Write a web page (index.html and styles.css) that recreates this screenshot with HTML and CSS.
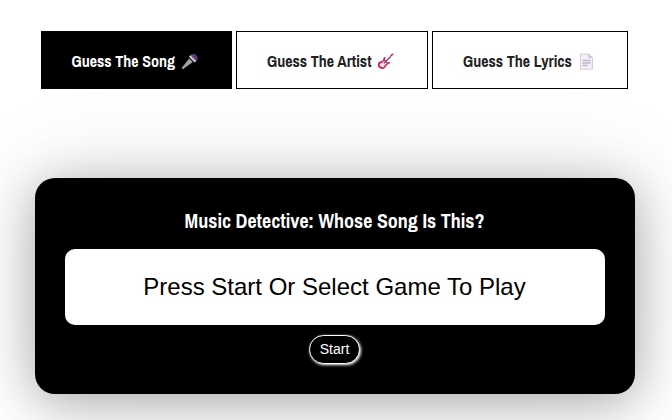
FILE: index.html
```html
<!DOCTYPE html>
<html lang="en">
<head>
<meta charset="utf-8">
<title>Music Detective</title>
<link rel="stylesheet" href="styles.css">
</head>
<body>
<nav class="games">
  <button class="game active"><span class="label song">Guess The Song</span>
    <svg class="icon" viewBox="0 0 17 17"><path d="M1 14.500 8.200 5.500l3.600 3.600-9.200 6.700Q.7 16.600 1 14.500Z" fill="#a2a0a3"/><path d="M9 4.500Q8.700 1.200 12 1q4.500.1 4.500 4.500 0 3-3.300 3Z" fill="#5c3b79"/><path d="m7.800 3.700 1.500-1.500 6 5.800-1.600 1.500Z" fill="#c9c5cc"/></svg></button>
  <button class="game"><span class="label artist">Guess The Artist</span>
    <svg class="icon" viewBox="0 0 17 17"><path d="M6 7C6.200 4.400 8.300 3.300 8.600 4.800L8 6.800l2.600 2.600 2-.4c1.300.3.200 1.900-1.700 2.400-1.200.3-1.700 1-2 2.200C7.900 16.300 5 16.600 3 15.300.7 14 0 10.600 2 9C3.300 8 5.500 8.600 6 7Z" fill="#d51b59"/><path d="M2.400 11q2.700-.7 4.700-3.200l2.800 2.700q-2.300.9-3 3.400-3.300 1.500-4.500-2.900Z" fill="#eee3eb"/><path d="m7 10.300 6.500-6.500" stroke="#65518b" stroke-width="1.500"/><path d="M12.800 3.400 14.500 1l2-.6-.2 1.400-2.300 2Z" fill="#d51b59"/></svg></button>
  <button class="game"><span class="label lyrics">Guess The Lyrics</span>
    <svg class="icon" viewBox="0 0 17 17"><path d="M2.500 1h8.300l3.700 3.700v11.500h-12Z" fill="#f3eef8" stroke="#d5cedd"/><path d="M10.500 1v4h4Z" fill="#c9bfd1"/><path d="M4.500 7.500h8M4.500 10h8M4.500 12.500h5" stroke="#c3b7cb" stroke-width="1.300"/></svg></button>
</nav>
<main class="card">
  <h1 class="title"><span class="heading">Music Detective: Whose Song Is This?</span></h1>
  <p class="prompt">Press Start Or Select Game To Play</p>
  <button class="start">Start</button>
</main>
</body>
</html>
```
FILE: styles.css
```css
* { box-sizing: border-box; }
html { overflow: hidden; }
body {
  min-height: 420px;
  margin: 0;
  padding-top: 31px;
  background: #fff;
  font-family: "Liberation Sans", Arial, sans-serif;
}
.games {
  display: flex;
  gap: 4px;
  margin-left: 41px;
}
.game {
  display: flex;
  align-items: center;
  justify-content: space-between;
  width: 192px;
  height: 58px;
  padding: 2px 33px 0 30px;
  border: 1px solid #000;
  background: #fff;
  color: #222;
  font: bold 16px/23px "Archivo Narrow", "Liberation Sans Narrow", "Liberation Sans", sans-serif;
  white-space: nowrap;
}
.game:first-child { width: 191px; padding-left: 29.5px; }
.game:last-child { width: 196px; padding-right: 32px; }
.game.active { background: #000; color: #fff; }
.icon { width: 17px; height: 17px; flex: none; }
.card {
  display: flex;
  flex-direction: column;
  align-items: center;
  width: 600px;
  height: 216px;
  margin: 89px 0 0 35px;
  padding: 28px 30px 30px;
  border-radius: 20px;
  background: #000;
  color: #fff;
  box-shadow: 0 8px 48px rgba(0, 0, 0, .28), 0 0 100px rgba(0, 0, 0, .12);
}
.title {
  margin: 0 1px 13px 0;
  font: bold 20px/30px "Archivo Narrow", "Liberation Sans Narrow", "Liberation Sans", sans-serif;
  white-space: nowrap;
}
.prompt {
  width: 100%;
  height: 76px;
  margin: 0 0 10px;
  padding-right: 1px;
  border-radius: 10px;
  background: #fff;
  color: #000;
  font-size: 24px;
  line-height: 76px;
  text-align: center;
}
.start {
  width: 51px;
  height: 29px;
  margin-right: 1px;
  padding: 0;
  border: 1px solid #fff;
  border-radius: 15px;
  background: #000;
  color: #fff;
  font: 14px/27px "Liberation Sans", Arial, sans-serif;
  box-shadow: 1px 1px 3px #fff;
}
```
